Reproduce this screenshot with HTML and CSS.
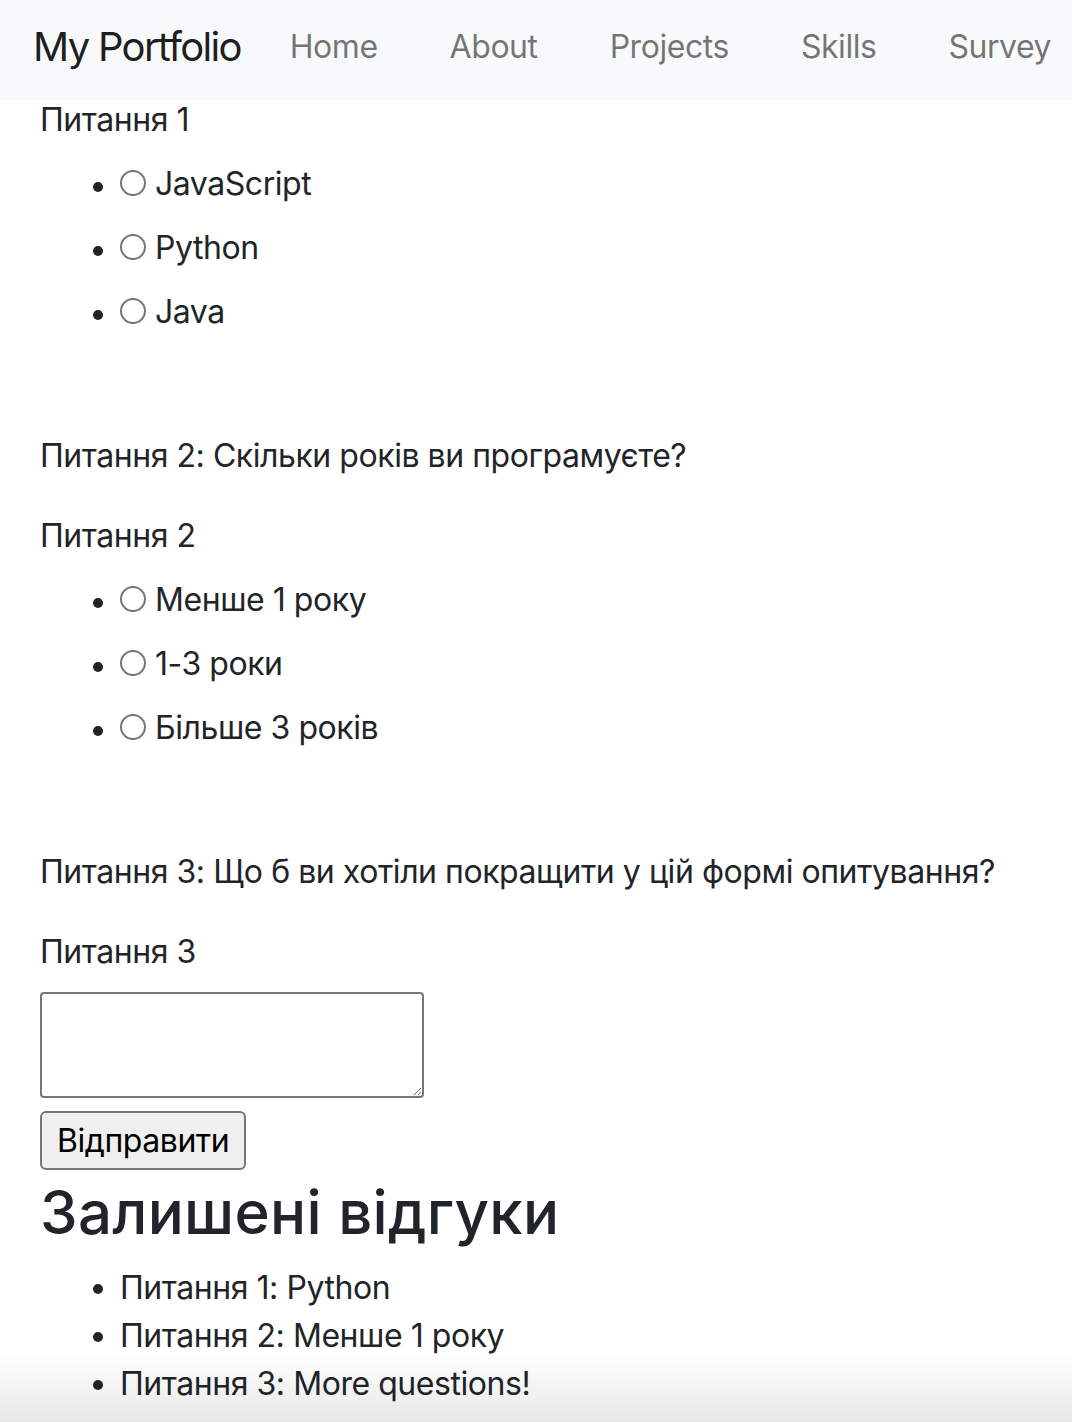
FILE: index.html
```html
<!DOCTYPE html>
<html lang="uk">
<head>
<meta charset="utf-8">
<title>My Portfolio</title>
<link rel="stylesheet" href="styles.css">
</head>
<body>
<nav class="navbar">
  <a class="brand" href="#">My Portfolio</a>
  <ul class="nav-links">
    <li><a href="#">Home</a></li>
    <li><a href="#">About</a></li>
    <li><a href="#">Projects</a></li>
    <li><a href="#">Skills</a></li>
    <li><a href="#">Survey</a></li>
  </ul>
</nav>
<main class="content">
  <form class="survey">
    <div class="question first">
      <label class="q-label">Питання 1</label>
      <ul class="options">
        <li><label><input type="radio" name="q1" class="radio"><span>JavaScript</span></label></li>
        <li><label><input type="radio" name="q1" class="radio"><span>Python</span></label></li>
        <li><label><input type="radio" name="q1" class="radio"><span>Java</span></label></li>
      </ul>
    </div>
    <div class="question">
      <p class="q-title">Питання 2: Скільки років ви програмуєте?</p>
      <label class="q-label">Питання 2</label>
      <ul class="options">
        <li><label><input type="radio" name="q2" class="radio"><span>Менше 1 року</span></label></li>
        <li><label><input type="radio" name="q2" class="radio"><span>1-3 роки</span></label></li>
        <li><label><input type="radio" name="q2" class="radio"><span>Більше 3 років</span></label></li>
      </ul>
    </div>
    <div class="question last">
      <p class="q-title">Питання 3: Що б ви хотіли покращити у цій формі опитування?</p>
      <label class="q-label">Питання 3</label>
      <textarea class="answer"></textarea>
    </div>
    <button type="button" class="submit">Відправити</button>
  </form>
  <h1 class="reviews-title">Залишені відгуки</h1>
  <ul class="reviews">
    <li>Питання 1: Python</li>
    <li>Питання 2: Менше 1 року</li>
    <li>Питання 3: More questions!</li>
  </ul>
</main>
<div class="bottom-shade"></div>
</body>
</html>
```

FILE: styles.css
```css
html, body {
  margin: 0;
  padding: 0;
}
body {
  font-family: Inter, "Noto Sans", sans-serif;
  font-size: 32px;
  line-height: 48px;
  color: #212529;
  background: #fff;
  letter-spacing: -0.45px;
}
.navbar {
  height: 100px;
  background: #f8f9fa;
  display: flex;
  align-items: center;
  padding-left: 33px;
  box-sizing: border-box;
  white-space: nowrap;
}
.brand {
  font-size: 40px;
  color: rgba(0, 0, 0, 0.9);
  text-decoration: none;
  margin-right: 49px;
  margin-top: -6px;
  letter-spacing: -1.7px;
}
.nav-links {
  list-style: none;
  display: flex;
  gap: 72px;
  margin: 0;
  padding: 0;
  margin-top: -6px;
}
.nav-links a {
  color: rgba(0, 0, 0, 0.55);
  text-decoration: none;
  font-size: 32px;
}
.content {
  padding: 0 40px;
}
.survey {
  margin: -4px 0 0;
}
.question {
  margin-bottom: 96px;
}
.question.last {
  margin-bottom: 13px;
}
.q-title {
  margin: 0 0 32px;
}
.q-label {
  display: block;
}
.options {
  margin: 16px 0 0;
  padding-left: 80px;
}
.options li {
  height: 48px;
}
.options li + li {
  margin-top: 16px;
}
.options label {
  display: flex;
  align-items: center;
  height: 48px;
}
.radio {
  appearance: none;
  -webkit-appearance: none;
  flex: none;
  width: 26px;
  height: 26px;
  margin: 0 9px 0 0;
  border: 2px solid #767676;
  border-radius: 50%;
  box-sizing: border-box;
  background: #fff;
  position: relative;
  top: -1px;
}
.answer {
  display: block;
  margin-top: 16px;
  width: 384px;
  height: 106px;
  box-sizing: border-box;
  border: 2px solid #767676;
  border-radius: 4px;
  font-family: inherit;
}
.submit {
  display: block;
  height: 59px;
  padding: 0 15px;
  font-family: inherit;
  font-size: 32px;
  letter-spacing: -0.45px;
  color: #000;
  background: #efefef;
  border: 2px solid #767676;
  border-radius: 6px;
}
.reviews-title {
  margin: 6px 0 0;
  font-size: 60px;
  line-height: 72px;
  font-weight: 500;
  letter-spacing: 0.3px;
}
.reviews {
  margin: 16px 0 0;
  padding-left: 80px;
}
.bottom-shade {
  position: fixed;
  left: 0;
  right: 0;
  bottom: 0;
  height: 70px;
  background: linear-gradient(to bottom, rgba(0, 0, 0, 0), rgba(0, 0, 0, 0.09));
  pointer-events: none;
}
```
